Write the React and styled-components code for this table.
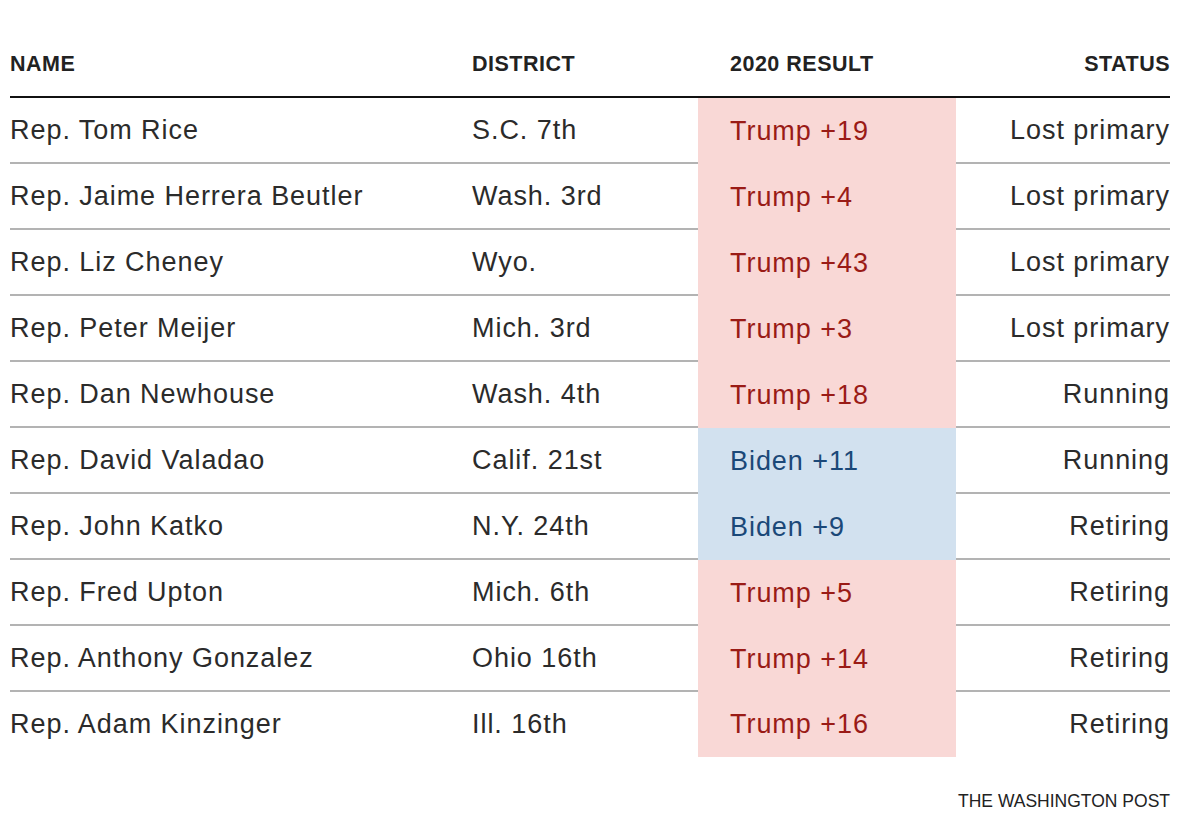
import React from "react";
import styled, { createGlobalStyle } from "styled-components";

const rows = [
  ["Rep. Tom Rice", "S.C. 7th", "Trump +19", "r", "Lost primary"],
  ["Rep. Jaime Herrera Beutler", "Wash. 3rd", "Trump +4", "r", "Lost primary"],
  ["Rep. Liz Cheney", "Wyo.", "Trump +43", "r", "Lost primary"],
  ["Rep. Peter Meijer", "Mich. 3rd", "Trump +3", "r", "Lost primary"],
  ["Rep. Dan Newhouse", "Wash. 4th", "Trump +18", "r", "Running"],
  ["Rep. David Valadao", "Calif. 21st", "Biden +11", "d", "Running"],
  ["Rep. John Katko", "N.Y. 24th", "Biden +9", "d", "Retiring"],
  ["Rep. Fred Upton", "Mich. 6th", "Trump +5", "r", "Retiring"],
  ["Rep. Anthony Gonzalez", "Ohio 16th", "Trump +14", "r", "Retiring"],
  ["Rep. Adam Kinzinger", "Ill. 16th", "Trump +16", "r", "Retiring"],
];

const GlobalStyle = createGlobalStyle`
  body {
    margin: 0;
    background: #fff;
    font-family: "Liberation Sans", Arial, sans-serif;
  }
`;

const Page = styled.div`
  width: 1160px;
  padding: 0 10px;
`;

const Grid = styled.div`
  display: grid;
  grid-template-columns: 462px 226px 258px 214px;
`;

const HeadRow = styled(Grid)`
  height: 96px;
  border-bottom: 2px solid #111;
  align-items: end;
`;

const HeadCell = styled.div`
  font-size: 21.5px;
  font-weight: 700;
  letter-spacing: 0.5px;
  color: #222;
  padding-bottom: 19px;
  text-align: ${(p) => (p.right ? "right" : "left")};
  padding-left: ${(p) => (p.result ? "32px" : "0")};
`;

const Row = styled(Grid)`
  height: ${(p) => (p.last ? "65px" : "64px")};
  border-bottom: ${(p) => (p.last ? "none" : "2px solid #b3b3b3")};
`;

const Cell = styled.div`
  display: flex;
  align-items: center;
  font-size: 27px;
  letter-spacing: 0.95px;
  color: #2b2b2b;
  justify-content: ${(p) => (p.right ? "flex-end" : "flex-start")};
`;

const Result = styled(Cell)`
  padding-left: 32px;
  background: ${(p) => (p.party === "d" ? "#d2e1ef" : "#f9d8d6")};
  color: ${(p) => (p.party === "d" ? "#1b4878" : "#9a1b16")};
  margin-bottom: ${(p) => (p.last ? "0" : "-2px")};
`;

const Credit = styled.div`
  text-align: right;
  font-size: 17.5px;
  color: #222;
  margin-top: 34px;
`;

export default function App() {
  return (
    <Page>
      <GlobalStyle />
      <HeadRow>
        <HeadCell>NAME</HeadCell>
        <HeadCell>DISTRICT</HeadCell>
        <HeadCell result>2020 RESULT</HeadCell>
        <HeadCell right>STATUS</HeadCell>
      </HeadRow>
      {rows.map((r, i) => {
        const last = i === rows.length - 1;
        return (
          <Row key={r[0]} last={last}>
            <Cell>{r[0]}</Cell>
            <Cell>{r[1]}</Cell>
            <Result party={r[3]} last={last}>{r[2]}</Result>
            <Cell right>{r[4]}</Cell>
          </Row>
        );
      })}
      <Credit>THE WASHINGTON POST</Credit>
    </Page>
  );
}
